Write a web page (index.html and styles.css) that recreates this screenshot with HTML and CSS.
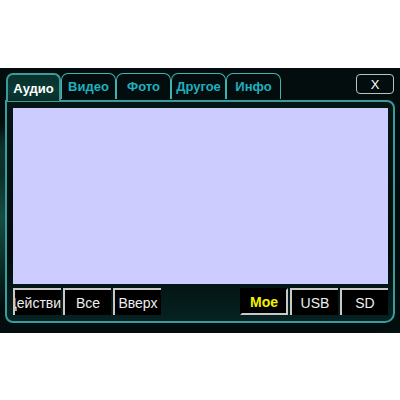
FILE: index.html
```html
<!DOCTYPE html>
<html lang="ru">

<head>
    <meta charset="UTF-8">
    <title>Аудио</title>
    <link rel="stylesheet" href="styles.css">
</head>

<body>

    <div class="device">
        <div class="top-row">
            <div class="tabs">
                <div class="tab active">Аудио</div>
                <div class="tab">Видео</div>
                <div class="tab">Фото</div>
                <div class="tab">Другое</div>
                <div class="tab">Инфо</div>
            </div>
            <div class="close-btn">X</div>
        </div>

        <div class="panel">
            <div class="list-area"></div>

            <div class="button-row">
                <div class="btn-group">
                    <div class="btn clipped"><span>Действия</span></div>
                    <div class="btn">Все</div>
                    <div class="btn">Вверх</div>
                </div>
                <div class="btn-group">
                    <div class="btn selected">Мое</div>
                    <div class="btn">USB</div>
                    <div class="btn">SD</div>
                </div>
            </div>
        </div>
    </div>

</body>

</html>
```

FILE: styles.css
```css
body {
    margin: 0;
    background-color: #ffffff;
    font-family: "Liberation Sans", Arial, sans-serif;
}

.device {
    margin-top: 68px;
    height: 265px;
    box-sizing: border-box;
    padding: 5px 5px 0 5px;
    background:
        radial-gradient(ellipse 40px 90px at 2px 150px, rgba(40, 140, 120, 0.5), transparent),
        radial-gradient(ellipse 120px 30px at 60px 80px, rgba(30, 110, 95, 0.45), transparent),
        radial-gradient(ellipse 60px 40px at 395px 300px, rgba(40, 140, 140, 0.45), transparent),
        #030d0d;
}

.top-row {
    display: flex;
    justify-content: space-between;
    align-items: flex-start;
    height: 27px;
}

.tabs {
    display: flex;
    padding-left: 1px;
    height: 27px;
}

.tab {
    width: 55px;
    height: 26px;
    box-sizing: border-box;
    margin-right: 0;
    border: 1px solid #3fb2b2;
    border-bottom: none;
    border-radius: 7px 7px 0 0;
    display: flex;
    justify-content: center;
    align-items: center;
    color: #1fb0bf;
    font-size: 13px;
    font-weight: bold;
}

.tab.active {
    color: #ffffff;
    height: 28px;
    border-width: 2px;
    border-color: #3d9a9a;
    position: relative;
    z-index: 1;
    background: linear-gradient(#0a302c, #0b3a33 60%, #0a2c28);
}

.close-btn {
    width: 36px;
    height: 18px;
    margin-top: 1px;
    margin-right: 1px;
    border: 1px solid #b8c4c4;
    border-radius: 4px;
    color: #ffffff;
    font-size: 13px;
    display: flex;
    justify-content: center;
    align-items: center;
}

.panel {
    height: 223px;
    box-sizing: border-box;
    border: 2px solid #3d9a9a;
    border-radius: 0 8px 10px 8px;
    padding: 6px 5px 6px 6px;
    display: flex;
    flex-direction: column;
    background: linear-gradient(#041614, #020a0a 70%, #062222);
}

.list-area {
    height: 177px;
    background-color: #ccccfe;
}

.button-row {
    display: flex;
    justify-content: space-between;
    margin-top: 4px;
}

.btn-group {
    display: flex;
}

.btn {
    width: 48px;
    height: 27px;
    box-sizing: border-box;
    background-color: #000000;
    border-top: 2px solid #c8c8c8;
    border-left: 2px solid #c8c8c8;
    color: #eeeeee;
    font-size: 14px;
    display: flex;
    justify-content: center;
    align-items: center;
    overflow: hidden;
    white-space: nowrap;
}

.btn-group .btn + .btn {
    margin-left: 2px;
}

.btn.clipped span {
    flex-shrink: 0;
}

.btn.selected {
    border-top: 2px solid #000000;
    border-left: 2px solid #000000;
    border-bottom: 2px solid #c8c8c8;
    border-right: 2px solid #c8c8c8;
    color: #f2f200;
    font-weight: bold;
}
```
